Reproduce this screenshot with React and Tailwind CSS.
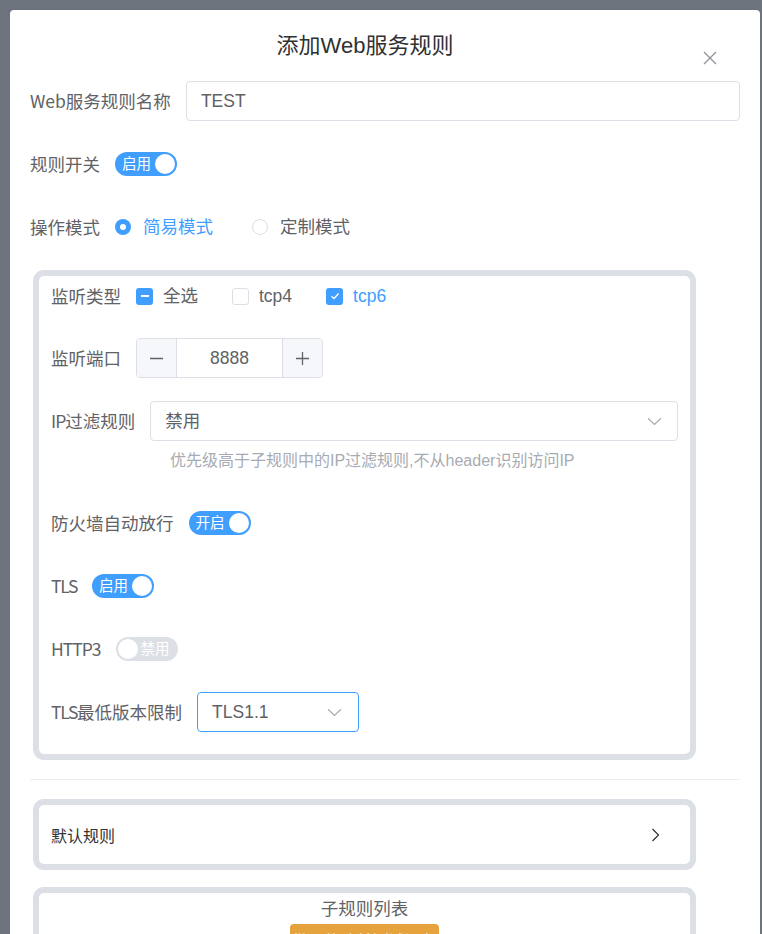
import React from "react";

const FONT = { fontFamily: '"Liberation Sans", "Noto Sans CJK SC", sans-serif' };
const LABEL_FONT = { fontFamily: '"Noto Sans CJK SC", "Liberation Sans", sans-serif' };

function Switch({ on, text, className = "" }) {
  return (
    <div
      className={`flex h-[24px] w-[62px] items-center rounded-full ${on ? "bg-[#409eff] justify-between pl-[7px] pr-[2px]" : "bg-[#dcdfe6] pl-[2px] pr-[8px]"} ${className}`}
    >
      {on ? (
        <>
          <span className="text-[14.5px] leading-none text-white">{text}</span>
          <span className="h-[20px] w-[20px] rounded-full bg-white" />
        </>
      ) : (
        <>
          <span className="h-[20px] w-[20px] rounded-full bg-white" />
          <span className="ml-[3px] text-[14.5px] leading-none text-white">{text}</span>
        </>
      )}
    </div>
  );
}

function Checkbox({ state, label }) {
  let box;
  if (state === "ind") {
    box = (
      <span className="flex h-[17px] w-[17px] items-center justify-center rounded-[3px] bg-[#409eff]">
        <span className="h-[2px] w-[8px] bg-white" />
      </span>
    );
  } else if (state === "on") {
    box = (
      <span className="flex h-[17px] w-[17px] items-center justify-center rounded-[3px] bg-[#409eff]">
        <svg width="10" height="8" viewBox="0 0 10 8" fill="none">
          <path d="M1.5 4.2 L4 6.5 L8.6 1.5" stroke="white" strokeWidth="1.3" />
        </svg>
      </span>
    );
  } else {
    box = <span className="h-[17px] w-[17px] rounded-[3px] border border-[#dcdfe6] bg-white" />;
  }
  return (
    <div className="flex items-center">
      {box}
      <span className={`ml-[10px] text-[17.5px] ${state === "on" ? "text-[#409eff]" : "text-[#606266]"}`}>{label}</span>
    </div>
  );
}

function Chevron({ className = "" }) {
  return (
    <svg className={className} width="15" height="9" viewBox="0 0 15 9" fill="none">
      <path d="M1 1.2 L7.5 7.5 L14 1.2" stroke="#a8abb2" strokeWidth="1.2" />
    </svg>
  );
}

function Row({ label, children, className = "mb-[23px]" }) {
  return (
    <div className={`flex h-[40px] items-center ${className}`}>
      <span className="mr-[15px] whitespace-nowrap text-[17.5px] text-[#606266]" style={LABEL_FONT}>
        {label}
      </span>
      {children}
    </div>
  );
}

export default function App() {
  return (
    <div className="h-[934px] w-[762px] overflow-hidden bg-[#6c737d] pl-[10px] pt-[10px]" style={FONT}>
      <div className="relative w-[750px] rounded-[4px] bg-white pb-[40px]">
        <div className="flex h-[52px] items-end justify-center pr-[40px]">
          <span className="text-[22px] leading-[32px] text-[#303133]">添加Web服务规则</span>
        </div>
        <button className="absolute left-[693px] top-[41px] flex h-[14px] w-[14px] items-center justify-center">
          <svg width="14" height="14" viewBox="0 0 14 14" fill="none">
            <path d="M1 1 L13 13 M13 1 L1 13" stroke="#909399" strokeWidth="1.3" />
          </svg>
        </button>

        <div className="px-[20px] pt-[19px]">
          <Row label="Web服务规则名称">
            <div className="flex h-[40px] flex-1 items-center rounded-[4px] border border-[#dcdfe6] px-[14px] text-[17.5px] text-[#606266]">
              TEST
            </div>
          </Row>
          <Row label="规则开关">
            <Switch on text="启用" />
          </Row>
          <Row label="操作模式">
            <div className="flex items-center">
              <span className="flex h-[16px] w-[16px] items-center justify-center rounded-full bg-[#409eff]">
                <span className="h-[6px] w-[6px] rounded-full bg-white" />
              </span>
              <span className="ml-[12px] text-[17.5px] text-[#409eff]">简易模式</span>
              <span className="ml-[39px] h-[16px] w-[16px] rounded-full border border-[#dcdfe6]" />
              <span className="ml-[12px] text-[17.5px] text-[#606266]">定制模式</span>
            </div>
          </Row>

          <div className="ml-[3px] w-[663px] rounded-[11px] border-[6px] border-[#dcdfe6] px-[12px]">
            <Row label="监听类型" className="mb-[22px]">
              <div className="flex items-center gap-[34px]">
                <Checkbox state="ind" label="全选" />
                <Checkbox state="off" label="tcp4" />
                <Checkbox state="on" label="tcp6" />
              </div>
            </Row>
            <Row label="监听端口">
              <div className="flex h-[40px] w-[187px] overflow-hidden rounded-[4px] border border-[#dcdfe6]">
                <div className="flex w-[40px] items-center justify-center border-r border-[#dcdfe6] bg-[#f5f7fa]">
                  <svg width="15" height="15" viewBox="0 0 15 15" fill="none">
                    <path d="M1 7.5 H14" stroke="#606266" strokeWidth="1.3" />
                  </svg>
                </div>
                <div className="flex flex-1 items-center justify-center text-[17.5px] text-[#606266]">8888</div>
                <div className="flex w-[40px] items-center justify-center border-l border-[#dcdfe6] bg-[#f5f7fa]">
                  <svg width="15" height="15" viewBox="0 0 15 15" fill="none">
                    <path d="M1 7.5 H14 M7.5 1 V14" stroke="#606266" strokeWidth="1.3" />
                  </svg>
                </div>
              </div>
            </Row>
            <Row label={<><span className="tracking-[-1px]">IP</span>过滤规则</>} className="mb-0">
              <div className="flex h-[40px] flex-1 items-center justify-between rounded-[4px] border border-[#dcdfe6] pl-[14px] pr-[15px]">
                <span className="text-[17.5px] text-[#606266]">禁用</span>
                <Chevron />
              </div>
            </Row>
            <div className="mb-[22px] flex h-[40px] items-center pl-[119px] text-[16px] text-[#a8abb2]">
              优先级高于子规则中的IP过滤规则,不从header识别访问IP
            </div>
            <Row label="防火墙自动放行">
              <Switch on text="开启" />
            </Row>
            <Row label={<span className="tracking-[-1.3px]">TLS</span>}>
              <Switch on text="启用" />
            </Row>
            <Row label={<span className="tracking-[-1px]">HTTP3</span>}>
              <Switch text="禁用" />
            </Row>
            <Row label={<><span className="tracking-[-1.3px]">TLS</span>最低版本限制</>} className="mb-[22px]">
              <div className="flex h-[40px] w-[162px] items-center justify-between rounded-[4px] border border-[#409eff] pl-[14px] pr-[16px]">
                <span className="text-[17.5px] text-[#606266]">TLS1.1</span>
                <Chevron />
              </div>
            </Row>
          </div>

          <div className="my-[19px] h-px bg-[#ebeef5]" />

          <div className="ml-[3px] w-[663px] rounded-[11px] border-[6px] border-[#dcdfe6] pl-[12px] pr-[30px]">
            <div className="flex h-[59px] items-center justify-between">
              <span className="text-[16px] text-[#303133]" style={LABEL_FONT}>默认规则</span>
              <svg width="9" height="14" viewBox="0 0 9 14" fill="none">
                <path d="M1.5 1 L7.5 7 L1.5 13" stroke="#303133" strokeWidth="1.2" />
              </svg>
            </div>
          </div>

          <div className="ml-[3px] mt-[17px] h-[200px] w-[663px] rounded-[11px] border-[6px] border-[#dcdfe6] px-[12px]">
            <div className="flex flex-col items-center">
              <span className="mt-[4px] text-[17.5px] leading-[24px] text-[#606266]">子规则列表</span>
              <div className="mt-[3px] flex h-[36px] w-[149px] items-center justify-center rounded-[4px] bg-[#e6a23c] text-[16px] text-white">
                批量修改并测试设备
              </div>
            </div>
          </div>
        </div>
      </div>
    </div>
  );
}
